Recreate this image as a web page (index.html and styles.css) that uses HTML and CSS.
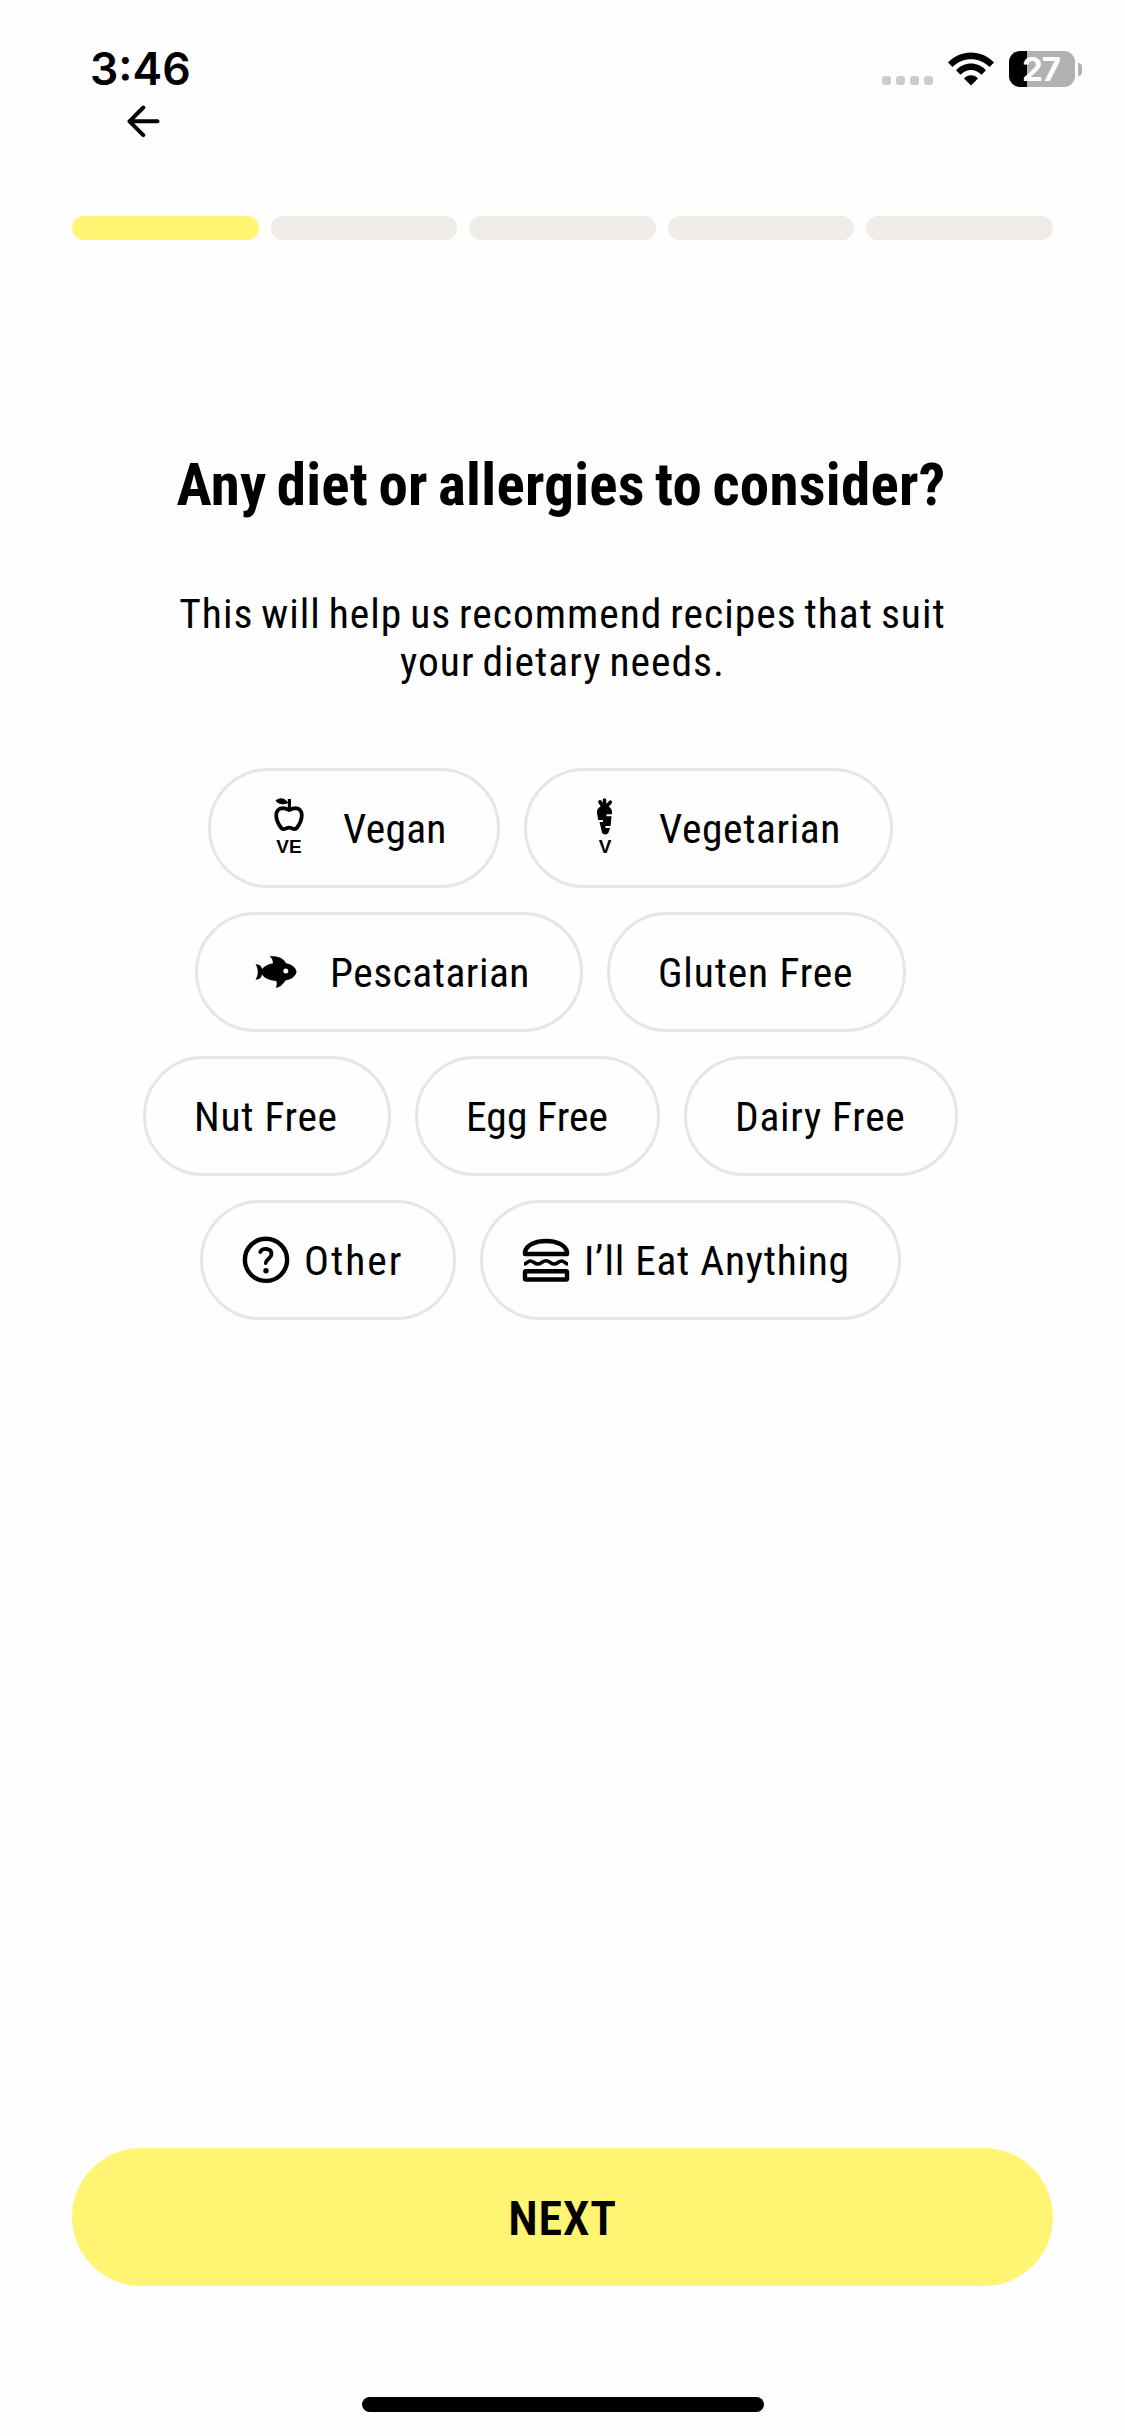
FILE: index.html
```
<!DOCTYPE html>
<html lang="en">
<head>
<meta charset="utf-8">
<title>Diet preferences</title>
<link rel="stylesheet" href="styles.css">
</head>
<body>
<div class="screen">
  <header class="status">
    <span class="time">3:46</span>
    <div class="signal"><i></i><i></i><i></i><i></i></div>
    <svg class="wifi" width="46" height="34" viewBox="0 0 46 34">
      <path d="M0 10.500C12-3 34-3 46 10.500L41.500 15C31.500 4.500 14.500 4.500 4.500 15Z"/>
      <path d="M8 18.200C16 9.200 30 9.200 38 18.200L33.500 22.700C27.500 16.400 18.500 16.400 12.500 22.700Z"/>
      <path d="M16 26.500C20 22.300 26 22.300 30 26.500L23 33.500Z"/>
    </svg>
    <div class="battery"><span>27</span></div>
    <div class="nub"></div>
  </header>
  <nav class="nav">
    <svg width="33" height="33" viewBox="0 0 33 33"><path d="M16.300 2.500L2.500 16.300L16.300 30.100M2.500 16.300H30.500"/></svg>
  </nav>
  <div class="progress"><i class="on"></i><i></i><i></i><i></i><i></i></div>
  <h1>Any diet or allergies to consider?</h1>
  <p class="lead">This will help us recommend recipes that suit<br>your dietary needs.</p>
  <main class="chips">
    <div class="row">
      <button class="chip badge vegan">
        <svg width="72" height="72" viewBox="0 0 72 72">
          <path class="line" d="M36.200 18C33.500 16.600 31.500 16.100 29.500 16.100C25.300 16.300 23.200 19.500 23.200 23.200C23.300 28 25.800 32.800 28.300 36C30.500 38.800 33 35.700 36.200 35.700C39.400 35.700 41.500 38.800 43.700 36C46.300 32.800 48.700 28 48.800 23.200C48.800 19.500 46.800 16.300 42.700 16.100C40.700 16.100 38.700 16.600 36.200 18Z"/>
          <path d="M34.800 7H38V18H34.800ZM22.500 8.800C25.500 5 31.500 5 35.200 10.700C31 13.300 25.500 12.800 22.500 8.800Z"/>
          <text x="36" y="61">VE</text>
        </svg><span>Vegan</span></button>
      <button class="chip badge vegetarian">
        <svg width="72" height="72" viewBox="0 0 72 72">
          <path class="leaf" d="M35.500 16V8M34 15L31 9.800M37 15L41.300 10.200"/>
          <path d="M32 14.500H39C42 15.500 43.500 18 43 22.200H37.500V24.200H42.500L41.600 34H36.500V36H41.200L39.500 40.500C38.500 43 34 43 33 40.500L30.500 30H34V28H29.200L28 21C27.700 17.500 29.500 15.300 32 14.500Z"/>
          <text x="36" y="61">V</text>
        </svg><span>Vegetarian</span></button>
    </div>
    <div class="row">
      <button class="chip badge pescatarian">
        <svg width="72" height="72" viewBox="0 0 72 72">
          <path fill-rule="evenodd" d="M15.500 28.300C19.500 28.300 21.500 30 22 33C25 29.500 28.500 28 33 27.200C32.800 24.500 32 22 29.500 20.300C37 19.500 43.500 21.500 46 27.200C51.500 28 56 31.500 56.500 35.500C56 40 51.500 43.500 45.500 44.500C44 46.500 41 51.500 35.700 51.800C37 49.500 37 47 36.300 45C29.500 44.500 25 42.500 22 38.500C21.500 41.500 19.500 43.700 15.500 43.700C18.500 39 18.500 33 15.500 28.300ZM45.800 32.500A2.500 2.500 0 1 0 45.800 37.500A2.500 2.500 0 1 0 45.800 32.500Z"/>
        </svg><span>Pescatarian</span></button>
      <button class="chip gluten"><span>Gluten Free</span></button>
    </div>
    <div class="row">
      <button class="chip nut"><span>Nut Free</span></button>
      <button class="chip egg"><span>Egg Free</span></button>
      <button class="chip dairy"><span>Dairy Free</span></button>
    </div>
    <div class="row">
      <button class="chip icon other">
        <svg width="48" height="48" viewBox="0 0 48 48">
          <circle cx="24" cy="23.800" r="21.100"/>
          <path class="hook" d="M18.300 16C19.500 11.700 29.600 11.600 29.500 18.200C29.300 22.500 23.700 23.500 23.700 27"/>
          <circle class="dot" cx="24" cy="34.700" r="2.700"/>
        </svg><span>Other</span></button>
      <button class="chip icon anything">
        <svg width="48" height="48" viewBox="0 0 48 48">
          <path d="M3 18V16C4.500 8.500 14 5 24 5C34 5 43.500 8.500 45 16V18Z"/>
          <path class="wave" d="M2 28C4.500 28 5.500 25 8.300 25C11.500 25 12.500 28 15.700 28C19 28 20.500 24.800 24 24.800C27.500 24.800 29 28 32.300 28C35.500 28 36.500 25 39.700 25C42.500 25 43.500 28 46 28"/>
          <rect x="3" y="35.200" width="42" height="8.300" rx="1"/>
        </svg><span>I’ll Eat Anything</span></button>
    </div>
  </main>
  <footer class="foot">
    <button class="next">NEXT</button>
    <div class="home"></div>
  </footer>
</div>
</body>
</html>
```
FILE: styles.css
```
* { box-sizing: border-box; }
body { margin: 0; background: #fefefe; }
.screen {
  width: 1125px;
  height: 2436px;
  display: flex;
  flex-direction: column;
  color: #000;
  font-family: Roboto, "Liberation Sans", sans-serif;
  font-stretch: 75%;
}
.status {
  display: flex;
  align-items: center;
  height: 102px;
  padding: 36px 43px 0 90px;
  font-family: Inter, "Liberation Sans", sans-serif;
  font-stretch: 100%;
}
.time { flex: 1; font-size: 44.500px; line-height: 66px; font-weight: 600; }
.signal { display: flex; gap: 5px; padding-top: 23px; margin-right: 15px; }
.signal i { width: 9px; height: 9px; border-radius: 3px; background: #ccc; }
.wifi { margin-right: 15px; }
.battery {
  width: 66px;
  height: 36px;
  border-radius: 11px;
  background: linear-gradient(90deg, #000 18px, #b1b1b1 18px);
  color: #fff;
  font-size: 33px;
  line-height: 36px;
  font-weight: 650;
  text-align: center;
  letter-spacing: -1px;
  padding-right: 2px;
}
.nub { width: 4px; height: 13px; margin-left: 3px; border-radius: 0 4px 4px 0; background: #b1b1b1; }
.nav { height: 114px; padding: 3px 0 0 127px; }
.nav svg { display: block; fill: none; stroke: #000; stroke-width: 4; stroke-linecap: round; stroke-linejoin: round; }
.progress { display: flex; gap: 12px; padding: 0 72px; }
.progress i { flex: 1; height: 24px; border-radius: 12px; background: #f0ece8; }
.progress .on { background: #fff573; }
h1 {
  margin: 209px 0 0;
  padding-right: 3px;
  font-size: 59px;
  line-height: 72px;
  font-weight: 700;
  letter-spacing: 0.280px;
  word-spacing: -3.700px;
  text-align: center;
  white-space: nowrap;
}
.lead {
  margin: 69px 0 0;
  font-size: 41.500px;
  line-height: 48px;
  font-weight: 400;
  letter-spacing: 1px;
  word-spacing: -2.600px;
  text-align: center;
}
.chips { display: flex; flex-direction: column; gap: 24px; margin-top: 82px; padding-right: 24px; }
.row { display: flex; justify-content: center; gap: 24px; }
.chip {
  display: flex;
  align-items: center;
  height: 120px;
  padding: 0 0 0 48px;
  border: 3px solid #e6e6e6;
  border-radius: 60px;
  background: none;
  color: #000;
  font: inherit;
  font-stretch: 75%;
  font-size: 41.500px;
  font-weight: 400;
  letter-spacing: 0.600px;
  white-space: nowrap;
}
.chip svg { flex: none; }
.badge { padding-left: 42px; gap: 18px; }
.badge .line { fill: none; stroke: #000; stroke-width: 3.800; stroke-linejoin: round; }
.badge .leaf { fill: none; stroke: #000; stroke-width: 3.600; stroke-linecap: round; }
.badge text { font: 700 19px "Liberation Sans", sans-serif; letter-spacing: 0; text-anchor: middle; }
.icon { padding-left: 39px; gap: 14px; }
.icon svg { fill: none; stroke: #000; stroke-width: 4.400; stroke-linejoin: round; stroke-linecap: round; }
.icon .hook { stroke-width: 3.800; }
.icon .dot { fill: #000; stroke: none; }
.icon .wave { stroke-width: 3.600; stroke-linecap: butt; }
.vegan { width: 292px; letter-spacing: 0.300px; }
.vegetarian { width: 369px; }
.pescatarian { width: 388px; letter-spacing: 0.500px; }
.gluten { width: 299px; letter-spacing: 0.850px; }
.nut { width: 248px; letter-spacing: 0.700px; }
.egg { width: 245px; letter-spacing: 0.100px; }
.dairy { width: 274px; letter-spacing: 0.700px; }
.other { width: 256px; letter-spacing: 2px; }
.anything { width: 421px; letter-spacing: 0.700px; }
.foot { margin-top: auto; padding: 0 72px 24px; display: flex; flex-direction: column; align-items: center; gap: 111px; }
.next {
  width: 100%;
  height: 138px;
  padding: 2px 0 0;
  border: 0;
  border-radius: 69px;
  background: #fff573;
  color: #000;
  font: inherit;
  font-stretch: 75%;
  font-size: 48px;
  font-weight: 600;
  letter-spacing: 0.700px;
}
.home { width: 402px; height: 15px; border-radius: 8px; background: #000; }
```
